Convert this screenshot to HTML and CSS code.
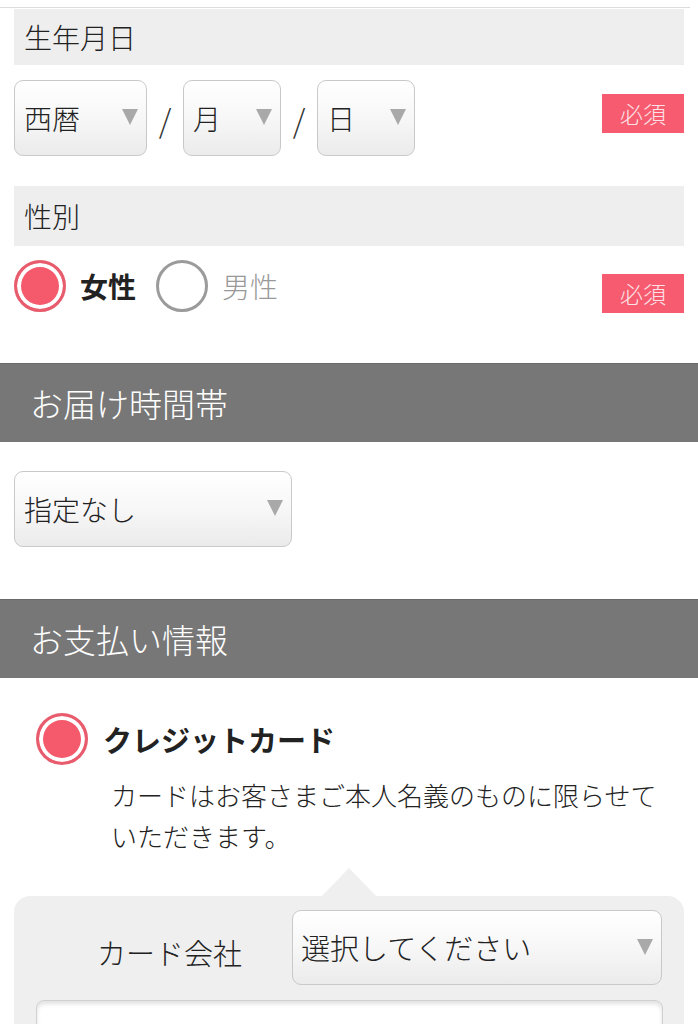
FILE: index.html
```html
<!DOCTYPE html>
<html lang="ja">
<head>
<meta charset="utf-8">
<title>お届け情報</title>
<link rel="stylesheet" href="styles.css">
</head>
<body>
<div class="topline"></div>
<div class="block">
  <div class="label first">生年月日</div>
  <div class="row">
    <div class="dates">
      <div class="select sel-year"><span>西暦</span><i class="arrow"></i></div>
      <span class="slash">/</span>
      <div class="select sel-small"><span>月</span><i class="arrow"></i></div>
      <span class="slash">/</span>
      <div class="select sel-small"><span>日</span><i class="arrow"></i></div>
    </div>
    <span class="req req-date">必須</span>
  </div>
  <div class="label second">性別</div>
  <div class="row gender">
    <div class="choices">
      <span class="radio on"></span><span class="opt on">女性</span>
      <span class="radio off"></span><span class="opt off">男性</span>
    </div>
    <span class="req req-gender">必須</span>
  </div>
</div>

<div class="hdr hdr-time">お届け時間帯</div>
<div class="block">
  <div class="select sel-time"><span>指定なし</span><i class="arrow"></i></div>
</div>

<div class="hdr hdr-pay">お支払い情報</div>
<div class="pay">
  <div class="pay-choice">
    <span class="radio on"></span><span class="opt on">クレジットカード</span>
  </div>
  <p class="note">カードはお客さまご本人名義のものに限らせて<br>いただきます。</p>
  <div class="cardbox">
    <div class="cardrow">
      <span class="cardlabel">カード会社</span>
      <div class="select sel-card"><span>選択してください</span><i class="arrow"></i></div>
    </div>
    <div class="input"></div>
  </div>
</div>
</body>
</html>
```

FILE: styles.css
```css
* { box-sizing: border-box; }
html, body { margin: 0; padding: 0; background: #fff; }
body {
  width: 698px;
  font-family: "Noto Sans CJK JP", "Noto Sans", sans-serif;
  font-weight: 300;
  color: #222;
  overflow: hidden;
}
.topline {
  height: 1px;
  width: 690px;
  margin-top: 7px;
  background: #dcdcdc;
}
.block { padding: 0 14px; }
.label {
  background: #eeeeee;
  font-size: 28px;
  line-height: 1;
  padding-left: 10px;
  display: flex;
  align-items: center;
  color: #222;
}
.label.first { height: 56px; margin-top: 1px; }
.label.second { height: 60px; margin-top: 30px; }
.row {
  display: flex;
  justify-content: space-between;
  align-items: flex-start;
  margin-top: 15px;
}
.dates { display: flex; align-items: center; }
.select {
  position: relative;
  height: 76px;
  border: 1.5px solid #c9c9c9;
  border-radius: 9px;
  background: linear-gradient(#ffffff 0%, #f7f7f7 50%, #ebebeb 100%);
  display: flex;
  align-items: center;
  padding-left: 9px;
  font-size: 28px;
  color: #222;
}
.select span { line-height: 1; }
.arrow {
  position: absolute;
  right: 8px;
  top: 50%;
  margin-top: -9px;
  width: 0;
  height: 0;
  border-left: 8.5px solid transparent;
  border-right: 8.5px solid transparent;
  border-top: 16px solid #a9a9a9;
}
.sel-year { width: 133px; }
.sel-small { width: 98px; }
.slash {
  width: 36px;
  text-align: center;
  font-size: 32px;
  font-weight: 300;
  color: #333;
  padding-top: 2px;
}
.req {
  width: 82px;
  height: 39px;
  background: #f65b70;
  color: #fde3e7;
  font-size: 23px;
  display: flex;
  align-items: center;
  justify-content: center;
  line-height: 1;
}
.req-date { margin-top: 14px; }
.gender { margin-top: 14px; }
.req-gender { margin-top: 14px; }
.choices { display: flex; align-items: center; }
.radio {
  width: 52px;
  height: 52px;
  border-radius: 50%;
  display: inline-block;
  flex: none;
}
.radio.on {
  border: 3px solid #e85d6e;
  background: #f45a6c;
  box-shadow: inset 0 0 0 4px #fff;
}
.radio.off {
  border: 3px solid #9b9b9b;
  background: #fff;
}
.opt { font-size: 28px; line-height: 1; }
.opt.on { font-weight: 700; color: #222; margin-left: 14px; margin-right: 20px; }
.opt.off { color: #999; margin-left: 14px; }

.hdr {
  height: 79px;
  background: #777777;
  border-top: 1px solid #6a6a6a;
  color: #fff;
  font-size: 33px;
  display: flex;
  align-items: center;
  padding-left: 30px;
  line-height: 1;
}
.hdr-time { margin-top: 50px; margin-bottom: 29px; }
.sel-time { width: 278px; }
.hdr-pay { margin-top: 52px; }

.pay { padding: 35px 14px 0; }
.pay-choice {
  display: flex;
  align-items: center;
  padding-left: 22px;
}
.pay-choice .opt.on { margin-left: 15px; font-size: 29px; }
.note {
  margin: 9px 0 0 97px;
  font-size: 26px;
  line-height: 41px;
  color: #222;
}
.cardbox {
  position: relative;
  margin-top: 40px;
  background: #efefef;
  border-radius: 16px 16px 0 0;
  padding: 14px 22px 0;
  height: 160px;
}
.cardbox::before {
  content: "";
  position: absolute;
  top: -28px;
  left: 308px;
  width: 0;
  height: 0;
  border-left: 27px solid transparent;
  border-right: 27px solid transparent;
  border-bottom: 28px solid #efefef;
}
.cardrow {
  display: grid;
  grid-template-columns: 256px 370px;
  align-items: center;
}
.cardlabel {
  font-size: 29px;
  text-align: right;
  padding-right: 50px;
  padding-top: 8px;
  color: #222;
}
.sel-card { width: 370px; height: 75px; padding-left: 8px; font-size: 29px; }
.input {
  margin-top: 15px;
  width: 627px;
  height: 70px;
  background: #fff;
  border: 1.5px solid #d0d0d0;
  border-radius: 8px;
  box-shadow: inset 0 3px 4px rgba(0,0,0,0.12);
}
```
